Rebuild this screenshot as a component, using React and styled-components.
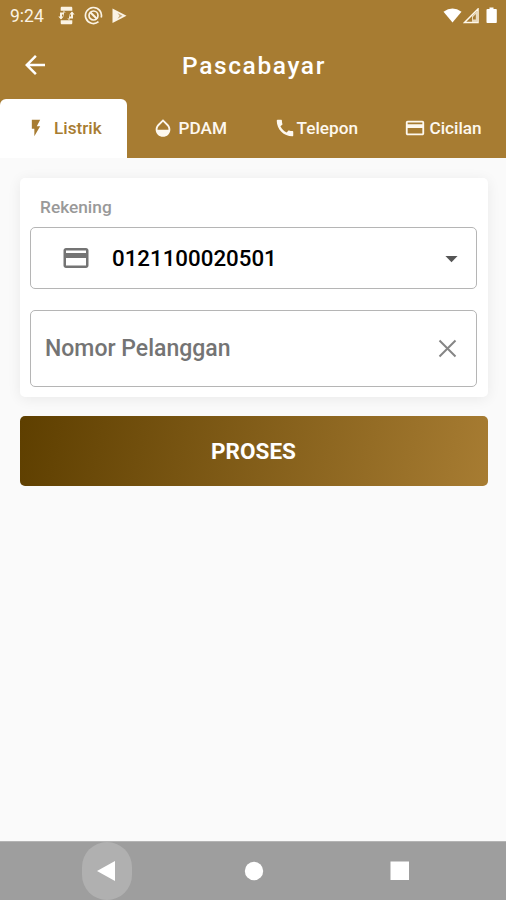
import React from "react";
import styled, { createGlobalStyle } from "styled-components";

const GlobalStyle = createGlobalStyle`
  * {
    box-sizing: border-box;
  }

  body {
    margin: 0;
    background: #fafafa;
    font-family: Roboto, "Liberation Sans", sans-serif;
  }
`;

const Screen = styled.div`
  display: flex;
  flex-direction: column;
  width: 506px;
  height: 900px;
  overflow: hidden;
  background: #fafafa;
`;

const Header = styled.header`
  flex: none;
  height: 158px;
  background: #a77c32;
  color: #ffffff;
`;

const StatusBar = styled.div`
  display: flex;
  align-items: center;
  justify-content: space-between;
  height: 31px;
  padding: 0 7px 0 10px;
`;

const StatusGroup = styled.div`
  display: flex;
  align-items: center;
  gap: ${(props) => props.$gap};
`;

const Clock = styled.span`
  width: 38px;
  margin-right: 2px;
  padding-top: 1px;
  font-size: 17.5px;
  line-height: 30px;
  color: #fbf3e4;
`;

const AppBar = styled.div`
  display: grid;
  grid-template-columns: 70px 1fr 68px;
  align-items: center;
  height: 68px;
`;

const BackButton = styled.button`
  display: flex;
  justify-content: center;
  padding: 0;
  border: 0;
  background: none;
  color: inherit;
`;

const Title = styled.h1`
  margin: 0;
  padding-top: 2px;
  text-align: center;
  font-size: 24.5px;
  font-weight: 500;
  letter-spacing: 1.6px;
  line-height: 66px;
`;

const Tabs = styled.nav`
  display: grid;
  grid-template-columns: repeat(4, 1fr);
  height: 59px;
`;

const Tab = styled.button`
  display: flex;
  align-items: center;
  gap: ${(props) => props.$gap};
  padding: 0 0 1px ${(props) => props.$indent};
  border: 0;
  border-radius: 6px 6px 0 0;
  background: ${(props) => (props.$active ? "#ffffff" : "transparent")};
  color: ${(props) => (props.$active ? "#a77c32" : "#fdf8ef")};
  font-family: inherit;
  font-size: 17.2px;
  font-weight: 500;
  white-space: nowrap;
`;

const Content = styled.main`
  flex: 1;
  padding: 20px 18px 0 20px;
`;

const Card = styled.section`
  height: 219px;
  padding: 16px 11px 0 10px;
  border-radius: 5px;
  background: #ffffff;
  box-shadow: 0 2px 14px rgba(0, 0, 0, 0.07);
`;

const Label = styled.div`
  height: 33px;
  padding-left: 10px;
  font-size: 17.3px;
  font-weight: 500;
  line-height: 27px;
  color: #999999;
`;

const Field = styled.div`
  display: flex;
  align-items: center;
  height: ${(props) => props.$height};
  padding: ${(props) => props.$padding};
  border: 1.5px solid #b5b5b5;
  border-radius: 5px;
  color: #747474;

  & + & {
    margin-top: 21px;
  }
`;

const FieldText = styled.span`
  flex: 1;
  margin-left: ${(props) => props.$offset || "0"};
  font-size: ${(props) => props.$size};
  font-weight: 500;
  color: ${(props) => props.$color};
`;

const ProcessButton = styled.button`
  display: block;
  width: 100%;
  height: 70px;
  margin-top: 19px;
  padding: 0 1px 1px 0;
  border: 0;
  border-radius: 5px;
  background: linear-gradient(100deg, #5e3f00, #a77c32);
  color: #ffffff;
  font-family: inherit;
  font-size: 22.5px;
  font-weight: 700;
`;

const NavBar = styled.footer`
  display: grid;
  grid-template-columns: 82px 50px 243px 50px 81px;
  flex: none;
  height: 59px;
  border-top: 1px solid #b4b4b4;
  background: #9e9e9e;
`;

const NavButton = styled.button`
  display: flex;
  align-items: center;
  justify-content: center;
  padding: 0;
  border: 0;
  border-radius: 25px;
  background: ${(props) => (props.$pressed ? "#b0b0b0" : "transparent")};
  grid-column: ${(props) => props.$column};
`;

const Icon = ({ d, size = 24, color = "currentColor" }) => (
  <svg width={size} height={size} viewBox="0 0 24 24" fill={color}>
    <path d={d} />
  </svg>
);

const cardPath =
  "M20 4H4c-1.11 0-1.99.89-1.99 2L2 18c0 1.11.89 2 2 2h16c1.11 0 2-.89 2-2V6c0-1.11-.89-2-2-2zm0 14H4v-6h16v6zm0-10H4V6h16v2z";

const tabs = [
  {
    label: "Listrik",
    icon: "M7 2v11h3v9l7-12h-4l4-8z",
    size: 20,
    indent: "26px",
    gap: "8px"
  },
  {
    label: "PDAM",
    icon: "M17.66 8L12 2.35 6.34 8C4.78 9.56 4 11.64 4 13.64s.78 4.11 2.34 5.67 3.61 2.35 5.66 2.35 4.1-.79 5.66-2.35S20 15.64 20 13.64 19.22 9.56 17.66 8zM6 14c.01-2 .62-3.27 1.76-4.4L12 5.27l4.24 4.38C17.38 10.77 17.99 12 18 14H6z",
    size: 22,
    indent: "25px",
    gap: "5px"
  },
  {
    label: "Telepon",
    icon: "M20.01 15.38c-1.23 0-2.42-.2-3.53-.56-.35-.12-.74-.03-1.01.24l-1.57 1.97c-2.83-1.35-5.48-3.9-6.89-6.83l1.95-1.66c.27-.28.35-.67.24-1.02-.37-1.11-.56-2.3-.56-3.53 0-.54-.45-.99-.99-.99H4.19C3.65 3 3 3.24 3 3.99 3 13.28 10.73 21 20.01 21c.71 0 .99-.63.99-1.18v-3.45c0-.54-.45-.99-.99-.99z",
    size: 22,
    indent: "20.5px",
    gap: "1px"
  },
  {
    label: "Cicilan",
    icon: cardPath,
    size: 22,
    indent: "24px",
    gap: "4px"
  }
];

const App = () => {
  return (
    <>
      <GlobalStyle />
      <Screen>
        <Header>
          <StatusBar>
            <StatusGroup $gap="8px">
              <Clock>9:24</Clock>
              <svg width="17" height="19" viewBox="0 0 17 19" fill="#fbf3e4">
                <path d="M4 .8h9c.8 0 1.300.5 1.300 1.300v2.700H2.700V2.100C2.700 1.300 3.200.8 4 .8zM2.700 14.200h11.600v2.700c0 .8-.5 1.300-1.300 1.300H4c-.8 0-1.300-.5-1.300-1.300z" />
                <path d="M2 12.500V6.500h3.500V4.500l3 3-3 3V8.500H4v4zM15 6.500v6h-3.500v2l-3-3 3-3v2H13v-4z" />
                <path d="M.3 10.500h5.400L3 13.500zM11.300 8.500h5.400L14 5.500z" />
                <path d="M6 6.500h5v6H6z" fill="#a77c32" />
              </svg>
              <svg width="20" height="19" viewBox="-1 0 20 19" fill="none" stroke="#fbf3e4">
                <path d="M14.500 15.700A8 8 0 1 1 17.200 11.500" strokeWidth="1.700" />
                <circle cx="9.500" cy="9.500" r="4.500" strokeWidth="1.700" />
                <path d="M6.300 6.300l6.700 6.700" strokeWidth="2" />
              </svg>
              <svg width="16" height="17" viewBox="0 0 16 17">
                <path d="M1.500 1.500l14 7.200-14 7.300z" fill="#fbf3e4" />
                <path d="M6.500 6l5 2.700-5 3 2-3z" fill="#c7a876" />
              </svg>
            </StatusGroup>
            <StatusGroup $gap="1px">
              <svg width="19" height="16" viewBox="0 0 19 16" fill="#ffffff">
                <path d="M.5 3.800Q9.500-3 18.500 3.800L9.500 14.500z" />
              </svg>
              <svg width="17" height="16" viewBox="0 0 17 16" fill="none">
                <path d="M1.500 14.500L15 1v13.500z" stroke="#fff8ea" strokeWidth="1.500" />
                <path d="M9 8l5-5v11H9z" fill="#e9dac0" />
                <path d="M10 9L12.800 6v5.500H10z" fill="#a77c32" />
              </svg>
              <svg width="18" height="17" viewBox="0 0 18 17" fill="#ffffff">
                <path d="M6.500 2h2V.5h4V2H15c.5 0 .8.300.8.800v12.400c0 .5-.3.800-.8.800H6.300c-.5 0-.8-.3-.8-.8V2.800c0-.5.4-.8 1-.8z" />
              </svg>
            </StatusGroup>
          </StatusBar>
          <AppBar>
            <BackButton aria-label="Back">
              <Icon
                size={30}
                d="M20 11H7.830l5.590-5.590L12 4l-8 8 8 8 1.410-1.410L7.830 13H20v-2z"
              />
            </BackButton>
            <Title>Pascabayar</Title>
          </AppBar>
          <Tabs>
            {tabs.map((tab, index) => (
              <Tab
                key={tab.label}
                $active={index === 0}
                $indent={tab.indent}
                $gap={tab.gap}
              >
                <Icon d={tab.icon} size={tab.size} />
                {tab.label}
              </Tab>
            ))}
          </Tabs>
        </Header>

        <Content>
          <Card>
            <Label>Rekening</Label>
            <Field $height="62px" $padding="0 10px 0 30px">
              <Icon d={cardPath} size={30} />
              <FieldText $offset="21px" $size="22.3px" $color="#000000">
                0121100020501
              </FieldText>
              <Icon d="M7 10l5 5 5-5z" size={29} color="#555555" />
            </Field>
            <Field $height="77px" $padding="0 13px 0 14px">
              <FieldText $size="23px" $color="#747474">
                Nomor Pelanggan
              </FieldText>
              <svg width="30" height="30" viewBox="0 0 30 30" stroke="#858585">
                <path d="M6.500 6.500l16 16M22.500 6.500l-16 16" strokeWidth="2" />
              </svg>
            </Field>
          </Card>
          <ProcessButton>PROSES</ProcessButton>
        </Content>

        <NavBar>
          <NavButton $pressed $column="2" aria-label="Back">
            <svg width="20" height="22" viewBox="0 0 20 22" fill="#ffffff">
              <path d="M0 11L18 1v20z" />
            </svg>
          </NavButton>
          <NavButton $column="3" aria-label="Home">
            <svg width="20" height="20" viewBox="0 0 20 20" fill="#ffffff">
              <circle cx="10" cy="10" r="9.2" />
            </svg>
          </NavButton>
          <NavButton $column="4" aria-label="Recent apps">
            <svg width="20" height="20" viewBox="0 0 20 20" fill="#ffffff">
              <rect x=".5" y=".5" width="18.500" height="18.500" />
            </svg>
          </NavButton>
        </NavBar>
      </Screen>
    </>
  );
};

export default App;
